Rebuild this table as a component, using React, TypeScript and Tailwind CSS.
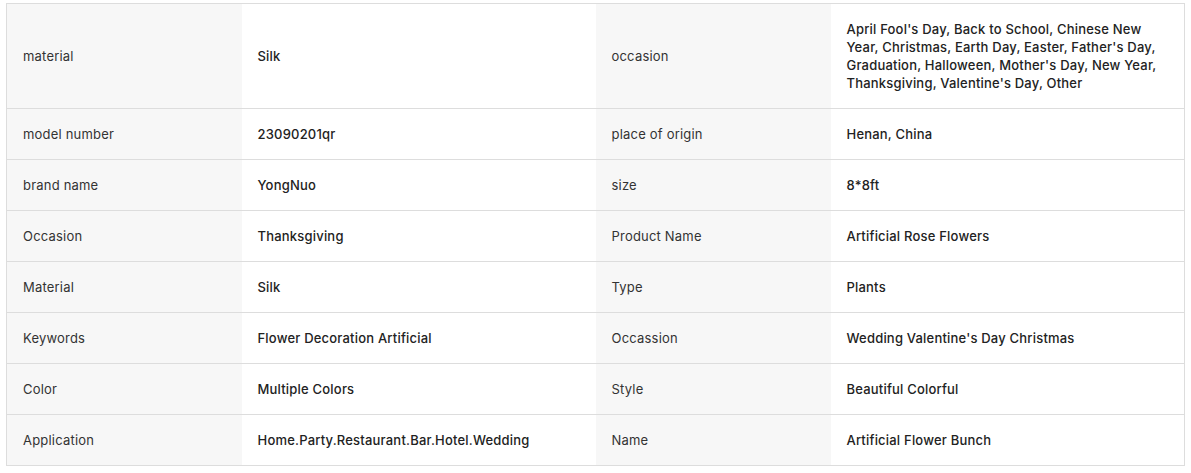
import React from "react";

const rows: [string, string, string, string][] = [
  ["material", "Silk", "occasion", "April Fool's Day, Back to School, Chinese New Year, Christmas, Earth Day, Easter, Father's Day, Graduation, Halloween, Mother's Day, New Year, Thanksgiving, Valentine's Day, Other"],
  ["model number", "23090201qr", "place of origin", "Henan, China"],
  ["brand name", "YongNuo", "size", "8*8ft"],
  ["Occasion", "Thanksgiving", "Product Name", "Artificial Rose Flowers"],
  ["Material", "Silk", "Type", "Plants"],
  ["Keywords", "Flower Decoration Artificial", "Occassion", "Wedding Valentine's Day Christmas"],
  ["Color", "Multiple Colors", "Style", "Beautiful Colorful"],
  ["Application", "Home.Party.Restaurant.Bar.Hotel.Wedding", "Name", "Artificial Flower Bunch"],
];

export default function App() {
  return (
    <div className="bg-white pl-[6px] pt-[3px] font-['Inter','Noto_Sans',sans-serif]">
      <table className="w-[1178px] border-collapse border border-[#dddddd] table-fixed text-[13px] leading-[18px] tracking-[0.2px]">
        <colgroup>
          <col className="w-[235px]" />
          <col className="w-[354px]" />
          <col className="w-[235px]" />
          <col className="w-[354px]" />
        </colgroup>
        <tbody>
          {rows.map((r, i) => (
            <tr key={i} className="border-b border-[#dddddd]">
              <td className="bg-[#f7f7f7] px-4 py-4 align-middle text-[#333333]">{r[0]}</td>
              <td className="bg-white px-4 py-4 align-middle font-medium text-[#222222]">{r[1]}</td>
              <td className="bg-[#f7f7f7] px-4 py-4 align-middle text-[#333333]">{r[2]}</td>
              <td className="bg-white px-4 py-4 pr-[26px] align-middle font-medium text-[#222222]">{r[3]}</td>
            </tr>
          ))}
        </tbody>
      </table>
    </div>
  );
}
